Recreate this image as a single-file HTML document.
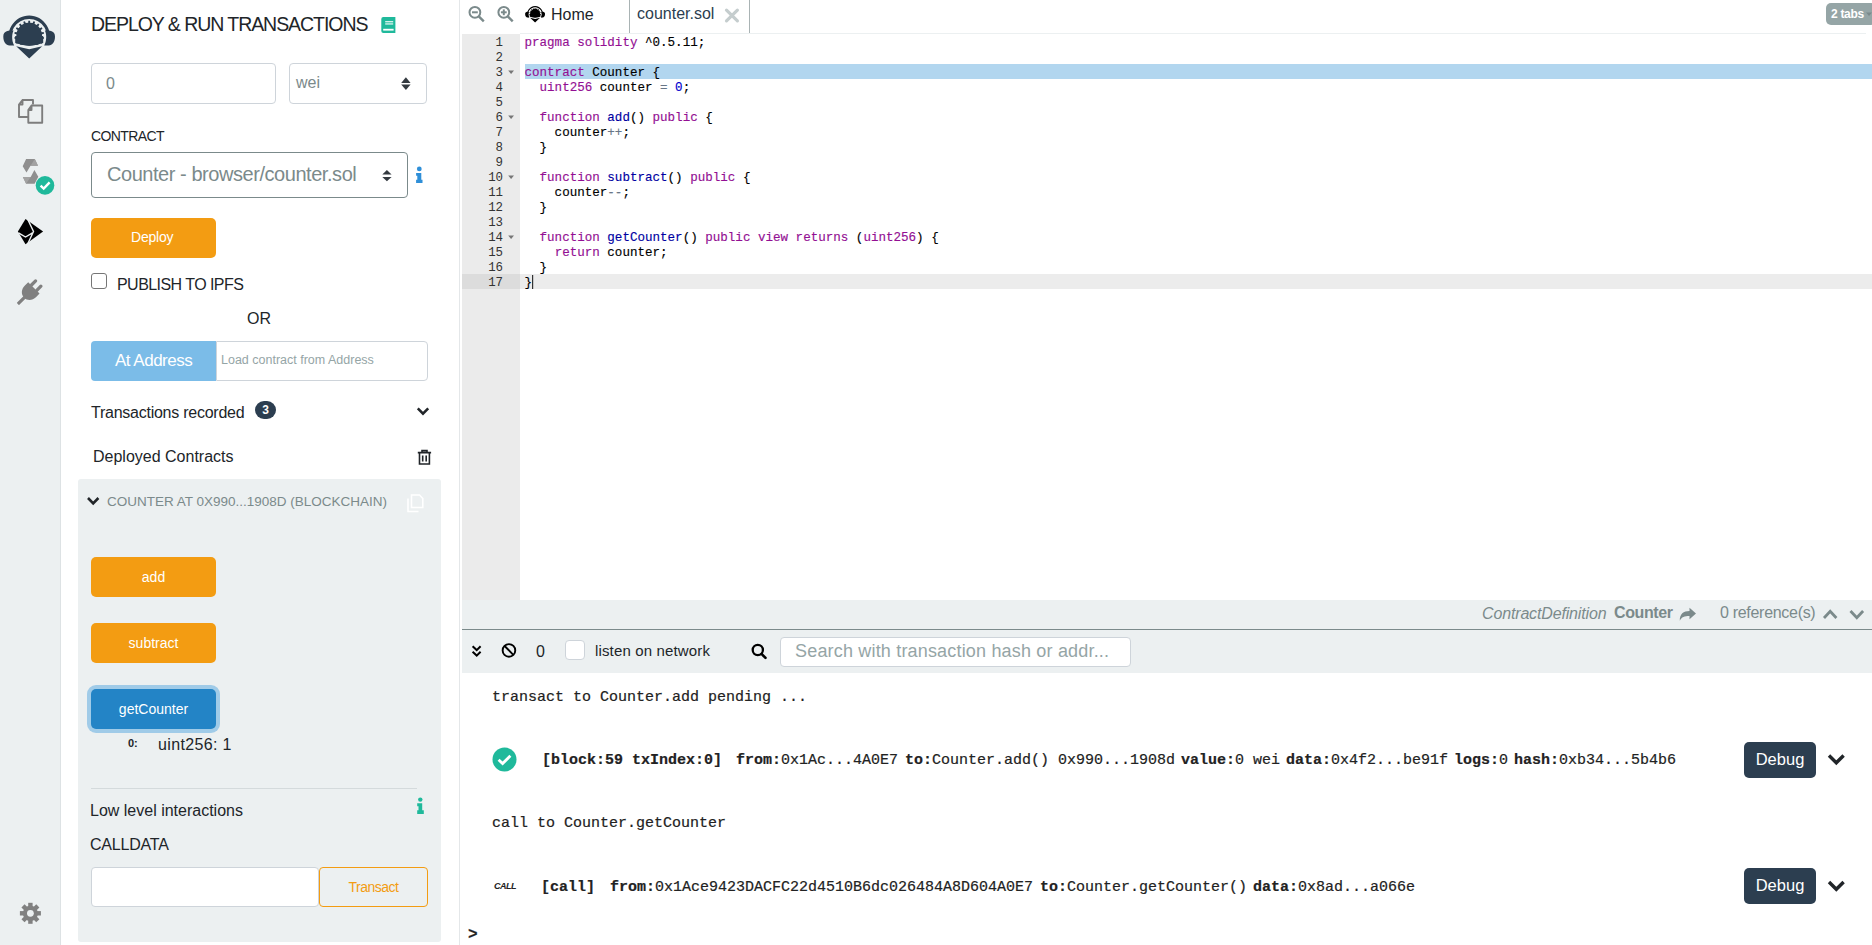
<!DOCTYPE html>
<html><head><meta charset="utf-8">
<style>
*{box-sizing:border-box;margin:0;padding:0}
html,body{width:1872px;height:945px;overflow:hidden;background:#fff;font-family:"Liberation Sans",sans-serif;color:#212529}
.a{position:absolute}
.t{position:absolute;white-space:nowrap;line-height:1}
#iconbar{left:0;top:0;width:60px;height:945px;background:#ecf0f1}
#iconbar-border{left:60px;top:0;width:1px;height:945px;background:#dde2e4}
#side{left:61px;top:0;width:399px;height:945px;background:#fff}
#side-border{left:459px;top:0;width:1px;height:945px;background:#e4e7e9}
.input{position:absolute;border:1px solid #ced4da;border-radius:4px;background:#fff}
.btn-w{position:absolute;background:#f39c12;border-radius:5px;color:#fff}
.mono{font-family:"Liberation Mono",monospace}
.code{position:absolute;left:524.5px;-webkit-text-stroke:0.15px currentColor;font-family:"Liberation Mono",monospace;font-size:12.55px;line-height:15px;white-space:pre;color:#000}
.ln{position:absolute;left:462px;width:41px;text-align:right;font-family:"Liberation Mono",monospace;font-size:12.4px;line-height:15px;color:#333}
.kw{color:#930f93}.fn{color:#0000a2}.num{color:#0000cd}.op{color:#687687}
.term{position:absolute;-webkit-text-stroke:0.2px currentColor;font-family:"Liberation Mono",monospace;font-size:15px;line-height:18px;white-space:pre;color:#222}
.term b{font-weight:bold}
.dbg{position:absolute;left:1744px;width:72px;height:36px;background:#2c3e50;border-radius:5px;color:#fff;font-size:16.5px;text-align:center;line-height:34px}
</style></head><body>

<!-- icon bar -->
<div id="iconbar" class="a"></div>
<div id="iconbar-border" class="a"></div>

<!-- side panel -->
<div id="side" class="a"></div>
<div id="side-border" class="a"></div>

<div id="title" class="t" style="left:91px;top:15px;font-size:19.5px;color:#212529;letter-spacing:-1.05px">DEPLOY &amp; RUN TRANSACTIONS</div>

<div class="input" style="left:91px;top:63px;width:185px;height:41px"></div>
<div id="val0" class="t" style="left:106px;top:76px;font-size:16px;color:#7b8a8b">0</div>
<div class="input" style="left:289px;top:63px;width:138px;height:41px"></div>
<div id="wei" class="t" style="left:296px;top:75px;font-size:16px;color:#7b8a8b">wei</div>

<div id="contract" class="t" style="left:91px;top:129px;font-size:14px;letter-spacing:-0.6px">CONTRACT</div>
<div class="input" style="left:91px;top:152px;width:317px;height:46px;border-color:#7b8a8b"></div>
<div id="csel" class="t" style="left:107px;top:164px;font-size:20px;color:#7b8a8b;letter-spacing:-0.45px">Counter - browser/counter.sol</div>

<div class="btn-w" style="left:91px;top:218px;width:125px;height:40px"></div>
<div id="deploy" class="t" style="left:131px;top:230px;font-size:14px;color:#fff;letter-spacing:-0.2px">Deploy</div>

<div class="a" style="left:91px;top:273px;width:16px;height:16px;border:1px solid #767676;border-radius:3px;background:#fff"></div>
<div id="publish" class="t" style="left:117px;top:277px;font-size:16px;letter-spacing:-0.55px">PUBLISH TO IPFS</div>
<div id="or" class="t" style="left:247px;top:311px;font-size:16px">OR</div>

<div class="a" style="left:91px;top:341px;width:125px;height:40px;background:#7bbce8;border-radius:4px 0 0 4px"></div>
<div id="ataddr" class="t" style="left:115px;top:352px;font-size:17px;color:#fff;letter-spacing:-0.5px">At Address</div>
<div class="input" style="left:216px;top:341px;width:212px;height:40px;border-radius:0 4px 4px 0"></div>
<div id="loadc" class="t" style="left:221px;top:354px;font-size:12.5px;color:#95a5a6">Load contract from Address</div>

<div id="txrec" class="t" style="left:91px;top:405px;font-size:16px;letter-spacing:-0.25px">Transactions recorded</div>
<div class="a" style="left:255px;top:401px;width:21px;height:18px;border-radius:9px;background:#2c3e50;color:#fff;font-size:12px;font-weight:bold;text-align:center;line-height:18px">3</div>

<div id="depc" class="t" style="left:93px;top:449px;font-size:16px">Deployed Contracts</div>

<div class="a" style="left:78px;top:479px;width:363px;height:463px;background:#ecf0f1;border-radius:3px"></div>
<div id="cat" class="t" style="left:107px;top:495px;font-size:13.5px;color:#7b8a8b">COUNTER AT 0X990...1908D (BLOCKCHAIN)</div>

<div class="btn-w" style="left:91px;top:557px;width:125px;height:40px"></div>
<div class="t" style="left:91px;top:570px;width:125px;text-align:center;font-size:14px;color:#fff">add</div>
<div class="btn-w" style="left:91px;top:623px;width:125px;height:40px"></div>
<div class="t" style="left:91px;top:636px;width:125px;text-align:center;font-size:14px;color:#fff">subtract</div>
<div class="a" style="left:87px;top:685px;width:133px;height:48px;background:#a0cbe8;border-radius:9px"></div>
<div class="a" style="left:91px;top:689px;width:125px;height:40px;background:#2384c6;border-radius:5px"></div>
<div class="t" style="left:91px;top:702px;width:125px;text-align:center;font-size:14px;color:#fff">getCounter</div>
<div class="t" style="left:128px;top:738px;font-size:11px;font-weight:bold">0:</div>
<div id="uint" class="t" style="left:158px;top:737px;font-size:16px;letter-spacing:0.35px">uint256: 1</div>

<div class="a" style="left:91px;top:788px;width:326px;height:1px;background:#d4dadc"></div>
<div id="lowlvl" class="t" style="left:90px;top:803px;font-size:16px">Low level interactions</div>
<div id="calldata" class="t" style="left:90px;top:837px;font-size:16px;letter-spacing:-0.2px">CALLDATA</div>
<div class="input" style="left:91px;top:867px;width:228px;height:40px"></div>
<div class="a" style="left:319px;top:867px;width:109px;height:40px;border:1px solid #f39c12;border-radius:4px"></div>
<div id="transact" class="t" style="left:319px;top:880px;width:109px;text-align:center;font-size:14px;color:#f39c12;letter-spacing:-0.5px">Transact</div>

<!-- main panel -->
<div id="home" class="t" style="left:551px;top:7px;font-size:16px">Home</div>
<div class="a" style="left:629px;top:0;width:1px;height:33px;background:#a9b3b4"></div>
<div class="a" style="left:749px;top:0;width:1px;height:33px;background:#a9b3b4"></div>
<div id="ctab" class="t" style="left:637px;top:6px;font-size:16px;color:#2c3e50">counter.sol</div>
<div class="a" style="left:520px;top:33px;width:1346px;height:1px;background:#ecf0f1"></div>
<div class="a" style="left:1826px;top:3px;width:50px;height:22px;border-radius:5px;background:#95a5a6"></div>
<div id="tabs2" class="t" style="left:1831px;top:8px;font-size:12px;font-weight:bold;color:#fff;letter-spacing:-0.3px">2 tabs</div>

<!-- editor -->
<div class="a" style="left:462px;top:34px;width:58px;height:566px;background:#ebebeb"></div>
<div class="a" style="left:525px;top:64px;width:1347px;height:15px;background:#b2d6ef"></div>
<div class="a" style="left:462px;top:274px;width:58px;height:15px;background:#dcdcdc"></div>
<div class="a" style="left:520px;top:274px;width:1352px;height:15px;background:#ececec"></div>

<div class="ln" style="top:36px">1</div>
<div class="code" style="top:36px"><span class="kw">pragma</span> <span class="kw">solidity</span> ^0.5.11;</div>
<div class="ln" style="top:51px">2</div>
<div class="ln" style="top:66px">3</div>
<div class="code" style="top:66px"><span class="kw">contract</span> Counter {</div>
<div class="ln" style="top:81px">4</div>
<div class="code" style="top:81px">  <span class="kw">uint256</span> counter <span class="op">=</span> <span class="num">0</span>;</div>
<div class="ln" style="top:96px">5</div>
<div class="ln" style="top:111px">6</div>
<div class="code" style="top:111px">  <span class="kw">function</span> <span class="fn">add</span>() <span class="kw">public</span> {</div>
<div class="ln" style="top:126px">7</div>
<div class="code" style="top:126px">    counter<span class="op">++</span>;</div>
<div class="ln" style="top:141px">8</div>
<div class="code" style="top:141px">  }</div>
<div class="ln" style="top:156px">9</div>
<div class="ln" style="top:171px">10</div>
<div class="code" style="top:171px">  <span class="kw">function</span> <span class="fn">subtract</span>() <span class="kw">public</span> {</div>
<div class="ln" style="top:186px">11</div>
<div class="code" style="top:186px">    counter<span class="op">--</span>;</div>
<div class="ln" style="top:201px">12</div>
<div class="code" style="top:201px">  }</div>
<div class="ln" style="top:216px">13</div>
<div class="ln" style="top:231px">14</div>
<div class="code" style="top:231px">  <span class="kw">function</span> <span class="fn">getCounter</span>() <span class="kw">public</span> <span class="kw">view</span> <span class="kw">returns</span> (<span class="kw">uint256</span>) {</div>
<div class="ln" style="top:246px">15</div>
<div class="code" style="top:246px">    <span class="kw">return</span> counter;</div>
<div class="ln" style="top:261px">16</div>
<div class="code" style="top:261px">  }</div>
<div class="ln" style="top:276px">17</div>
<div class="code" style="top:276px">}</div>

<!-- status bar -->
<div class="a" style="left:462px;top:600px;width:1410px;height:29px;background:#ecf0f1"></div>
<div class="a" style="left:462px;top:629px;width:1410px;height:1px;background:#7b8a8b"></div>
<div id="cdef" class="t" style="left:1482px;top:606px;font-size:16px;font-style:italic;color:#7b8a8b;letter-spacing:-0.15px">ContractDefinition</div>
<div id="cname" class="t" style="left:1614px;top:605px;font-size:16px;font-weight:bold;color:#7b8a8b;letter-spacing:-0.4px">Counter</div>
<div id="refs" class="t" style="left:1720px;top:605px;font-size:16px;color:#7b8a8b;letter-spacing:-0.3px">0 reference(s)</div>

<!-- terminal header -->
<div class="a" style="left:462px;top:630px;width:1410px;height:43px;background:#ecf0f1"></div>
<div id="zero" class="t" style="left:536px;top:644px;font-size:16px">0</div>
<div class="a" style="left:565px;top:640px;width:20px;height:20px;border:1px solid #ced4da;border-radius:4px;background:#fff"></div>
<div id="listen" class="t" style="left:595px;top:643px;font-size:15px;letter-spacing:0.15px">listen on network</div>
<div class="input" style="left:780px;top:637px;width:351px;height:30px"></div>
<div id="search" class="t" style="left:795px;top:642px;font-size:18px;color:#95a5a6;letter-spacing:0.18px">Search with transaction hash or addr...</div>

<!-- terminal -->
<div id="term1" class="term" style="left:492px;top:689px">transact to Counter.add pending ...</div>
<div id="term2" class="term" style="left:542px;top:752px"><b>[block:59 txIndex:0]</b></div>
<div class="term" style="left:736px;top:752px"><b>from:</b>0x1Ac...4A0E7</div>
<div class="term" style="left:905px;top:752px"><b>to:</b>Counter.add() 0x990...1908d</div>
<div class="term" style="left:1181px;top:752px"><b>value:</b>0 wei</div>
<div class="term" style="left:1286px;top:752px"><b>data:</b>0x4f2...be91f</div>
<div class="term" style="left:1454px;top:752px"><b>logs:</b>0</div>
<div id="term5" class="term" style="left:1514px;top:752px"><b>hash:</b>0xb34...5b4b6</div>
<div id="dbg1" class="dbg t" style="top:742px">Debug</div>

<div id="term3" class="term" style="left:492px;top:815px">call to Counter.getCounter</div>
<div id="term4" class="term" style="left:541px;top:879px"><b>[call]</b></div>
<div class="term" style="left:610px;top:879px"><b>from:</b>0x1Ace9423DACFC22d4510B6dc026484A8D604A0E7</div>
<div class="term" style="left:1040px;top:879px"><b>to:</b>Counter.getCounter()</div>
<div class="term" style="left:1253px;top:879px"><b>data:</b>0x8ad...a066e</div>
<div id="dbg2" class="dbg t" style="top:868px">Debug</div>
<div id="prompt" class="term" style="left:468px;top:926px;font-size:16px"><b>&gt;</b></div>


<svg class="a" style="left:0;top:0" width="1872" height="945" viewBox="0 0 1872 945">
<!-- remix logo sidebar -->
<defs><g id="rlogo">
  <path d="M10.6,45 A20.6,20.6 0 1 1 47.8,45 L45.3,45 A18,18 0 1 0 13.1,45 Z"/>
  <path d="M13.5,30.5 C9,30.5 3.3,30.5 3.3,36.5 C3.3,42 6,45.5 9.5,45.5 L14.2,45.5 C11.8,41 11.5,35 13.5,30.5 Z"/>
  <path d="M44.9,30.5 C49.4,30.5 55,30.5 55,36.5 C55,42 52.3,45.5 48.8,45.5 L44.2,45.5 C46.6,41 46.9,35 44.9,30.5 Z"/>
  <clipPath id="gclip"><polygon points="0,0 60,0 60,42.3 29.2,45.8 0,42.3"/></clipPath>
  <path clip-path="url(#gclip)" d="M28.21,22.64 L28.32,20.63 L30.08,20.63 L30.19,22.64 L32.67,23.08 L33.46,21.22 L35.12,21.83 L34.53,23.75 L36.71,25.01 L38.08,23.54 L39.44,24.67 L38.23,26.28 L39.84,28.21 L41.64,27.30 L42.52,28.83 L40.83,29.93 L41.69,32.29 L43.69,32.05 L44.00,33.79 L42.04,34.24 L42.04,36.76 L44.00,37.21 L43.69,38.95 L41.69,38.71 L40.83,41.07 L42.52,42.17 L41.64,43.70 L39.84,42.79 L38.23,44.72 L39.44,46.33 L38.08,47.46 L36.71,45.99 L34.53,47.25 L35.12,49.17 L33.46,49.78 L32.67,47.92 L30.19,48.36 L30.08,50.37 L28.32,50.37 L28.21,48.36 L25.73,47.92 L24.94,49.78 L23.28,49.17 L23.87,47.25 L21.69,45.99 L20.32,47.46 L18.96,46.33 L20.17,44.72 L18.56,42.79 L16.76,43.70 L15.88,42.17 L17.57,41.07 L16.71,38.71 L14.71,38.95 L14.40,37.21 L16.36,36.76 L16.36,34.24 L14.40,33.79 L14.71,32.05 L16.71,32.29 L17.57,29.93 L15.88,28.83 L16.76,27.30 L18.56,28.21 L20.17,26.28 L18.96,24.67 L20.32,23.54 L21.69,25.01 L23.87,23.75 L23.28,21.83 L24.94,21.22 L25.73,23.08 Z"/>
  <polygon clip-path="url(#gclip)" points="15.2,36 15.2,43 29.2,47 43.2,43 43.2,36"/>
  <path d="M16.2,46.2 L29.2,49.3 L42.2,46.2 L29.2,58.4 Z"/>
</g>
</defs>
<use href="#rlogo" fill="#2c3e50"/>
<!-- files icon -->
<g fill="none" stroke="#7d7d7d" stroke-width="1.9" stroke-linejoin="round">
  <path d="M22.5,100 L33,100 L33,104.5 M28.3,117 L19,117 L19,104.5 L22.5,100 L22.5,104.5 L19,104.5"/>
  <path d="M31.5,105.5 L42.2,105.5 L42.2,122.8 L28.3,122.8 L28.3,110 L31.5,105.5 L31.5,110 L28.3,110"/>
</g>
<!-- solidity icon -->
<polygon points="26.1,159.1 34.8,159.1 38,165.7 30.5,165.7 26.5,172.6 22.7,166.2" fill="#8f8f8f"/>
<polygon points="34.8,159.1 38,165.7 30.5,165.7" fill="#a3a3a3"/>
<polygon points="34.4,169.9 38.3,176.7 34.6,183.8 26.1,183.8 22.9,177 30.7,177" fill="#8f8f8f"/>
<polygon points="22.9,177 30.7,177 26.1,183.8" fill="#a3a3a3"/>
<circle cx="45" cy="185.4" r="9.3" fill="#1fb99b"/>
<path d="M40.6,185.6 L43.7,188.6 L49.6,182.4" fill="none" stroke="#fff" stroke-width="2.4"/>
<!-- deploy icon -->
<polygon points="25.5,219 43.1,231.5 25.5,244.3 17.9,231.5" fill="#000"/>
<path d="M18.5,232.8 L25.5,237 L32.5,232.8 M27.3,218.5 L33.5,231.5 L27.3,244.8" fill="none" stroke="#ecf0f1" stroke-width="1.4"/>
<!-- plug icon -->
<g transform="translate(30.2,291.6) rotate(45)" fill="#808080">
  <rect x="-5.4" y="-13" width="3.3" height="9" rx="1.6"/>
  <rect x="2.1" y="-13" width="3.3" height="9" rx="1.6"/>
  <path d="M-8,-5.2 L8,-5.2 L8,-0.5 C8,5 4.4,8.6 0,8.6 C-4.4,8.6 -8,5 -8,-0.5 Z"/>
  <rect x="-1.6" y="6" width="3.2" height="11.5" rx="0.6"/>
</g>
<!-- gear -->
<g transform="translate(30.4,913.3)" fill="#808080">
  <circle r="7.6"/>
  <g id="tooth"><rect x="-2.2" y="-10.5" width="4.4" height="5"/></g>
  <use href="#tooth" transform="rotate(45)"/><use href="#tooth" transform="rotate(90)"/><use href="#tooth" transform="rotate(135)"/>
  <use href="#tooth" transform="rotate(180)"/><use href="#tooth" transform="rotate(225)"/><use href="#tooth" transform="rotate(270)"/><use href="#tooth" transform="rotate(315)"/>
  <circle r="3.4" fill="#ecf0f1"/>
</g>
<!-- book icon -->
<path d="M383.3,16.9 L395.4,16.9 L395.4,32.9 L383.3,32.9 Q381.3,32.9 381.3,30.9 L381.3,18.9 Q381.3,16.9 383.3,16.9 Z" fill="#1fb99b"/>
<rect x="385.2" y="21.2" width="8" height="1.1" fill="#fff"/>
<rect x="385.2" y="23.4" width="8" height="1.1" fill="#fff"/>
<rect x="383.2" y="28.8" width="10.4" height="1.8" fill="#fff"/>
<!-- select arrows -->
<g fill="#343a40">
  <polygon points="401.2,83 405.9,77.3 410.6,83"/><polygon points="401.2,84.5 405.9,90 410.6,84.5"/>
  <polygon points="382.3,174.6 386.9,169.9 391.6,174.6"/><polygon points="382.3,176.9 386.9,181.2 391.6,176.9"/>
</g>
<!-- info blue -->
<g fill="#2f8fd8">
  <circle cx="419.3" cy="168.9" r="2.4"/>
  <path d="M416.1,172.9 L421.3,172.9 L421.3,179.8 L422.5,179.8 L422.5,182.9 L416.1,182.9 L416.1,179.8 L417.3,179.8 L417.3,175.8 L416.1,175.8 Z"/>
</g>
<!-- info green -->
<g fill="#1fb99b">
  <circle cx="420.3" cy="799.6" r="2.2"/>
  <path d="M417.2,803.2 L422.2,803.2 L422.2,810.3 L423.8,810.3 L423.8,814 L417.2,814 L417.2,810.3 L418.5,810.3 L418.5,806.2 L417.2,806.2 Z"/>
</g>
<!-- chevrons -->
<path d="M417.8,408.4 L423,413.6 L428.2,408.4" fill="none" stroke="#212529" stroke-width="2.6"/>
<path d="M88,498 L93.2,503.4 L98.4,498" fill="none" stroke="#212529" stroke-width="2.6"/>
<!-- trash -->
<g fill="none" stroke="#212529" stroke-width="1.6">
  <path d="M417.8,452.6 L431.1,452.6 M422,452.6 L422,450.6 L427,450.6 L427,452.6"/>
  <path d="M419.5,453 L419.5,464 L429.4,464 L429.4,453"/>
  <path d="M422.7,455.5 L422.7,461.5 M426.2,455.5 L426.2,461.5"/>
</g>
<!-- copy icon -->
<g fill="none" stroke="#ffffff" stroke-width="1.6">
  <path d="M411.5,495 L419.5,495 L422.8,498.5 L422.8,507.5 L411.5,507.5 Z"/>
  <path d="M408,498.5 L408,511.5 L418.5,511.5"/>
</g>
<!-- zoom icons -->
<g fill="none" stroke="#7b8a8b" stroke-width="2">
  <circle cx="474.9" cy="12.3" r="5.4"/><line x1="472" y1="12.3" x2="477.8" y2="12.3"/><line x1="478.8" y1="16.3" x2="483.8" y2="21.3" stroke-width="2.4"/>
  <circle cx="503.8" cy="12.3" r="5.4"/><line x1="500.9" y1="12.3" x2="506.7" y2="12.3"/><line x1="503.8" y1="9.4" x2="503.8" y2="15.2"/><line x1="507.7" y1="16.3" x2="512.7" y2="21.3" stroke-width="2.4"/>
</g>
<!-- home logo (small) -->
<use href="#rlogo" fill="#000" transform="translate(523.85,0.03) scale(0.385)"/>
<!-- close X -->
<path d="M726.5,10.2 L737.4,20.9 M737.4,10.2 L726.5,20.9" stroke="#c5cdce" stroke-width="3.2" stroke-linecap="round" fill="none"/>
<!-- 2 tabs caret -->
<polygon points="1866,12.5 1872,12.5 1869,16" fill="#7b8a8b"/>
<!-- share icon -->
<path d="M1696,613.5 L1689.5,607.8 L1689.5,611 C1683.5,611 1679.5,614 1679.8,620.8 C1681.5,617 1684.5,616 1689.5,616 L1689.5,619.2 Z" fill="#7b8a8b"/>
<!-- up/down chevrons status -->
<path d="M1824,618 L1830.2,611.3 L1836.4,618 M1850.5,611 L1856.8,617.7 L1863.1,611" fill="none" stroke="#7b8a8b" stroke-width="2.8"/>
<!-- double chevron -->
<path d="M472.6,646.3 L476.7,650.1 L480.6,646.3 M472.6,651.8 L476.7,655.6 L480.6,651.8" fill="none" stroke="#000" stroke-width="2"/>
<!-- ban -->
<circle cx="508.95" cy="650.4" r="6.3" fill="none" stroke="#000" stroke-width="1.9"/>
<line x1="504.6" y1="646" x2="513.3" y2="654.8" stroke="#000" stroke-width="1.9"/>
<!-- search -->
<circle cx="757.8" cy="650" r="5.1" fill="none" stroke="#000" stroke-width="2.3"/>
<line x1="761.5" y1="653.8" x2="765.5" y2="657.8" stroke="#000" stroke-width="2.6" stroke-linecap="round"/>
<!-- check circle terminal -->
<circle cx="504.5" cy="759.6" r="12" fill="#1fb99b"/>
<path d="M498.6,759.8 L502.6,763.6 L510.4,755.8" fill="none" stroke="#fff" stroke-width="2.8"/>
<!-- debug chevrons -->
<path d="M1829,755.5 L1836.3,762.8 L1843.6,755.5 M1829,882 L1836.3,889.3 L1843.6,882" fill="none" stroke="#212529" stroke-width="3.4"/>
<!-- fold arrows -->
<g fill="#777">
  <polygon points="508.2,70.5 514,70.5 511.1,74"/>
  <polygon points="508.2,115.5 514,115.5 511.1,119"/>
  <polygon points="508.2,175.5 514,175.5 511.1,179"/>
  <polygon points="508.2,235.5 514,235.5 511.1,239"/>
</g>
<!-- cursor -->
<rect x="532" y="275" width="1.2" height="14" fill="#333"/>
</svg>
<div id="callabel" class="t" style="left:494px;top:882px;font-size:9px;font-weight:bold;font-style:italic;color:#222;letter-spacing:-0.5px">CALL</div>

</body></html>
